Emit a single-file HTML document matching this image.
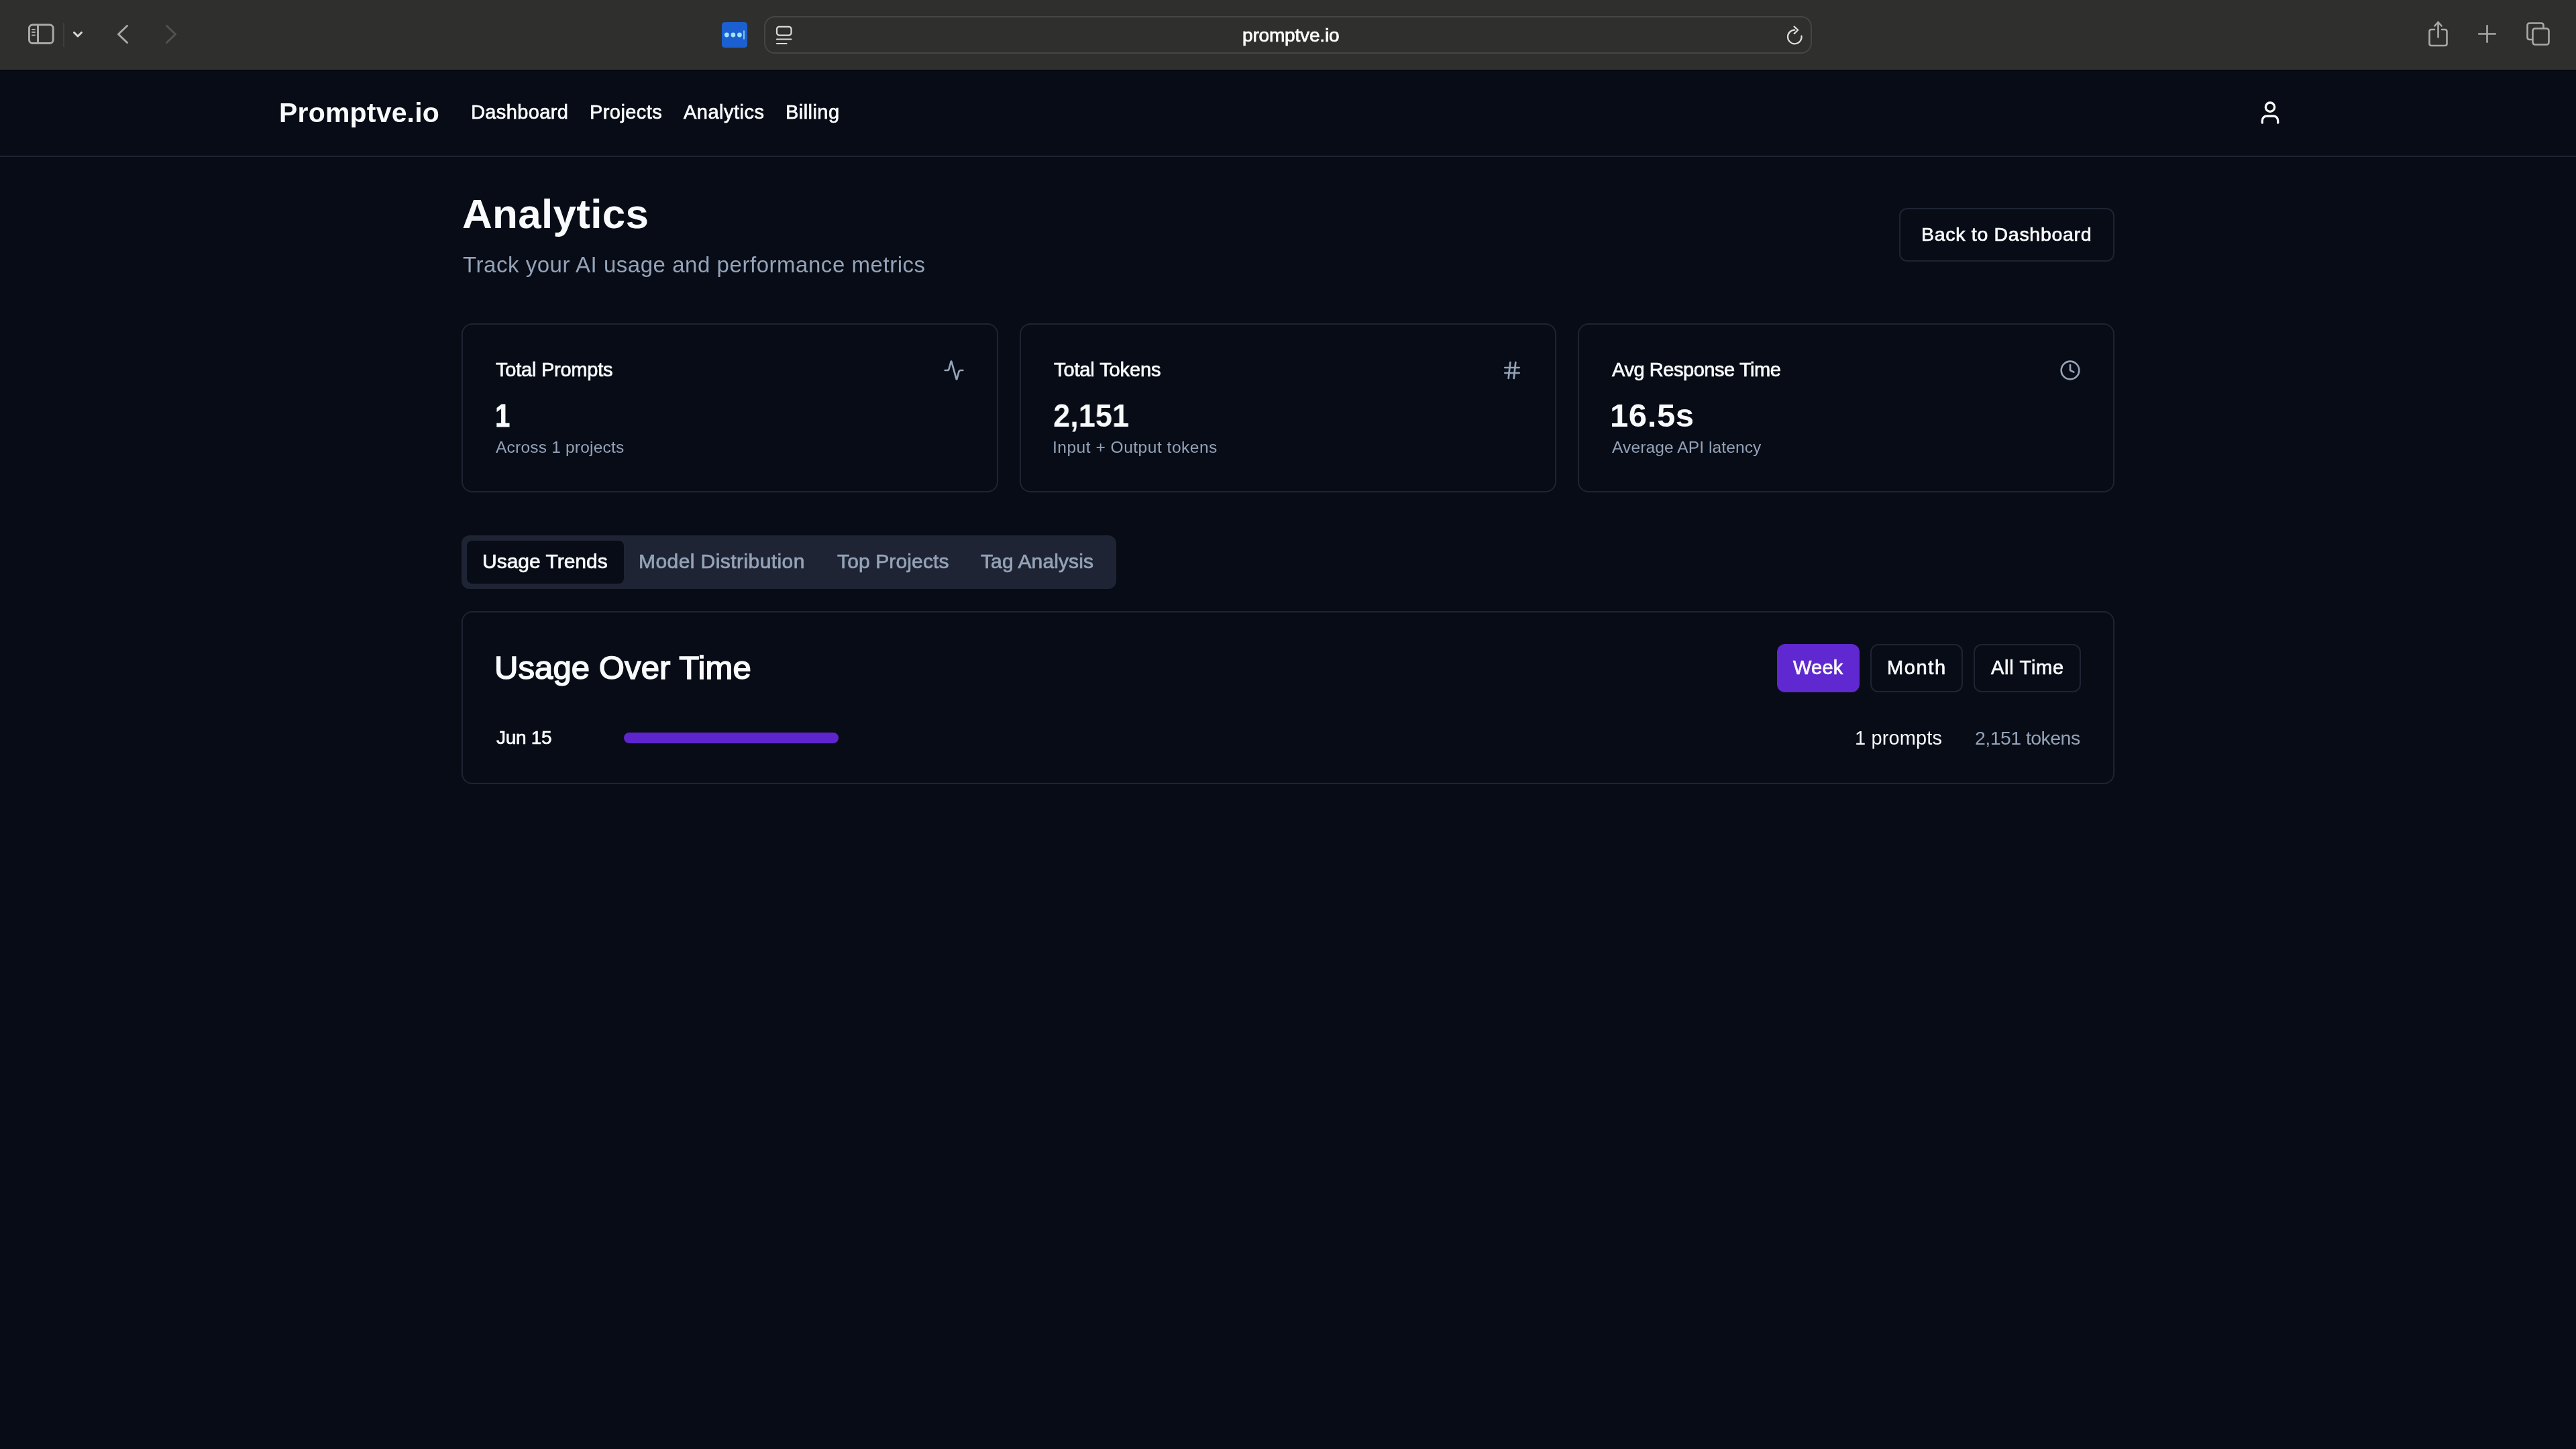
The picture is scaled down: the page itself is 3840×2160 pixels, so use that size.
<!DOCTYPE html>
<html><head><meta charset="utf-8"><title>Promptve.io - Analytics</title>
<style>
html,body{margin:0;padding:0;width:3840px;height:2160px;overflow:hidden;background:#080c16;font-family:"Liberation Sans",sans-serif;}
.b{position:absolute;}
.t{position:absolute;white-space:pre;will-change:transform;}
</style></head><body>
<div class="b" style="left:0px;top:0px;width:3840px;height:104px;background:#2f2f2e;border-radius:0px;"></div><div class="b" style="left:0px;top:104px;width:3840px;height:1px;background:#000000;border-radius:0px;"></div><div class="b" style="left:0px;top:232px;width:3840px;height:2px;background:#1e2433;border-radius:0px;"></div><div class="b" style="left:1139px;top:24px;width:1562px;height:56px;background:#2f2f2e;border:2px solid #464645;border-radius:16px;box-sizing:border-box;"></div><div class="b" style="left:2831px;top:310px;width:321px;height:80px;background:#080c16;border:2px solid #1e2433;border-radius:12px;box-sizing:border-box;"></div><div class="b" style="left:688px;top:482px;width:800px;height:252px;background:#080c16;border:2px solid #1e2433;border-radius:16px;box-sizing:border-box;"></div><div class="b" style="left:1520px;top:482px;width:800px;height:252px;background:#080c16;border:2px solid #1e2433;border-radius:16px;box-sizing:border-box;"></div><div class="b" style="left:2352px;top:482px;width:800px;height:252px;background:#080c16;border:2px solid #1e2433;border-radius:16px;box-sizing:border-box;"></div><div class="b" style="left:688px;top:798px;width:976px;height:80px;background:#1e2433;border-radius:12px;"></div><div class="b" style="left:696px;top:806px;width:234px;height:64px;background:#080c16;border-radius:8px;"></div><div class="b" style="left:688px;top:911px;width:2464px;height:258px;background:#080c16;border:2px solid #1e2433;border-radius:16px;box-sizing:border-box;"></div><div class="b" style="left:2649px;top:960px;width:123px;height:72px;background:#6028d0;border-radius:12px;"></div><div class="b" style="left:2788px;top:960px;width:138px;height:72px;background:#080c16;border:2px solid #1e2433;border-radius:12px;box-sizing:border-box;"></div><div class="b" style="left:2942px;top:960px;width:160px;height:72px;background:#080c16;border:2px solid #1e2433;border-radius:12px;box-sizing:border-box;"></div><div class="b" style="left:930px;top:1092px;width:320px;height:16px;background:#5e25ce;border-radius:8px;"></div>
<svg class="b" style="left:0;top:0" width="3840" height="104" viewBox="0 0 3840 104" fill="none" stroke-linecap="round" stroke-linejoin="round">
 <rect x="43.5" y="37" width="35.7" height="27.5" rx="5" stroke="#a9a9a8" stroke-width="3"/>
 <line x1="56.5" y1="38" x2="56.5" y2="64" stroke="#a9a9a8" stroke-width="3"/>
 <line x1="48" y1="44" x2="52" y2="44" stroke="#a9a9a8" stroke-width="2"/>
 <line x1="48" y1="48" x2="52" y2="48" stroke="#a9a9a8" stroke-width="2"/>
 <line x1="48" y1="52.5" x2="52" y2="52.5" stroke="#a9a9a8" stroke-width="2"/>
 <line x1="95" y1="34.5" x2="95" y2="69.5" stroke="#454544" stroke-width="1.5"/>
 <polyline points="110.5,48.5 116,54 121.5,48.5" stroke="#d8d8d7" stroke-width="3"/>
 <polyline points="189.5,38.5 176.5,51 189.5,63.5" stroke="#a9a9a8" stroke-width="3"/>
 <polyline points="248.5,38.5 261.5,51 248.5,63.5" stroke="#525251" stroke-width="3"/>
 <rect x="1076" y="33" width="38" height="38" rx="4.5" fill="#1c5fd0" stroke="none"/>
 <circle cx="1083.3" cy="52" r="3.4" fill="#9fe3ff" stroke="none"/>
 <circle cx="1092.9" cy="52" r="3.4" fill="#9fe3ff" stroke="none"/>
 <circle cx="1102.4" cy="52" r="3.4" fill="#9fe3ff" stroke="none"/>
 <line x1="1109" y1="45.5" x2="1109" y2="58.5" stroke="#9fe3ff" stroke-width="1.5" stroke-linecap="butt"/>
 <rect x="1158" y="39.8" width="21.5" height="12.8" rx="3.5" stroke="#dcdcdb" stroke-width="2.2"/>
 <line x1="1158" y1="58.5" x2="1179.5" y2="58.5" stroke="#dcdcdb" stroke-width="2.2"/>
 <line x1="1158" y1="65" x2="1172.5" y2="65" stroke="#dcdcdb" stroke-width="2.2"/>
 <path d="M2685.5 53.6 A10.3 10.3 0 1 1 2675.3 44.7" stroke="#dedede" stroke-width="2.2"/>
 <polyline points="2674.6,39.6 2680.2,44.8 2674.6,50.1" stroke="#dedede" stroke-width="2.2"/>
 <path d="M3629 44 H3624.5 Q3621.5 44 3621.5 47 V65 Q3621.5 68 3624.5 68 H3644.5 Q3647.5 68 3647.5 65 V47 Q3647.5 44 3644.5 44 H3640" stroke="#a9a9a8" stroke-width="2.6"/>
 <line x1="3634.5" y1="33.5" x2="3634.5" y2="55.5" stroke="#a9a9a8" stroke-width="2.6"/>
 <polyline points="3629.5,38.5 3634.5,33 3639.5,38.5" stroke="#a9a9a8" stroke-width="2.6"/>
 <line x1="3707.5" y1="38.2" x2="3707.5" y2="62.8" stroke="#a9a9a8" stroke-width="2.6"/>
 <line x1="3695.2" y1="50.5" x2="3719.8" y2="50.5" stroke="#a9a9a8" stroke-width="2.6"/>
 <path d="M3774 59 H3771 Q3767.5 59 3767.5 55.5 V38 Q3767.5 34.5 3771 34.5 H3788 Q3791.5 34.5 3791.5 38 V41" stroke="#a9a9a8" stroke-width="2.6"/>
 <rect x="3775.5" y="42.5" width="24" height="24" rx="3.5" stroke="#a9a9a8" stroke-width="2.6"/>
</svg>
<svg class="b" style="left:3364px;top:148px" width="40" height="40" viewBox="0 0 24 24" fill="none" stroke="#f8fafc" stroke-width="2" stroke-linecap="round" stroke-linejoin="round" ><path d="M19 21v-2a4 4 0 0 0-4-4H9a4 4 0 0 0-4 4v2"/><circle cx="12" cy="7" r="4"/></svg><svg class="b" style="left:1406px;top:536px" width="32" height="32" viewBox="0 0 24 24" fill="none" stroke="#94a3b8" stroke-width="2" stroke-linecap="round" stroke-linejoin="round" ><path d="M22 12h-2.48a2 2 0 0 0-1.93 1.46l-2.35 8.36a.25.25 0 0 1-.48 0L9.24 2.18a.25.25 0 0 0-.48 0l-2.35 8.36A2 2 0 0 1 4.49 12H2"/></svg><svg class="b" style="left:2238px;top:536px" width="32" height="32" viewBox="0 0 24 24" fill="none" stroke="#94a3b8" stroke-width="2" stroke-linecap="round" stroke-linejoin="round" ><line x1="4" x2="20" y1="9" y2="9"/><line x1="4" x2="20" y1="15" y2="15"/><line x1="10" x2="8" y1="3" y2="21"/><line x1="16" x2="14" y1="3" y2="21"/></svg><svg class="b" style="left:3070px;top:536px" width="32" height="32" viewBox="0 0 24 24" fill="none" stroke="#94a3b8" stroke-width="2" stroke-linecap="round" stroke-linejoin="round" ><circle cx="12" cy="12" r="10"/><polyline points="12 6 12 12 16 14"/></svg>
<div class="t" style="left:1851.6px;top:39.0px;font-size:28px;line-height:28px;font-weight:400;color:#ffffff;letter-spacing:-0.18px;-webkit-text-stroke:0.7px #ffffff;">promptve.io</div><div class="t" style="left:415.5px;top:148.0px;font-size:41px;line-height:41px;font-weight:700;color:#f8fafc;letter-spacing:0.19px;">Promptve.io</div><div class="t" style="left:701.8px;top:152.6px;font-size:29px;line-height:29px;font-weight:400;color:#f8fafc;letter-spacing:0.37px;-webkit-text-stroke:0.7px #f8fafc;">Dashboard</div><div class="t" style="left:878.5px;top:152.5px;font-size:29px;line-height:29px;font-weight:400;color:#f8fafc;letter-spacing:0.43px;-webkit-text-stroke:0.7px #f8fafc;">Projects</div><div class="t" style="left:1019.2px;top:152.5px;font-size:29px;line-height:29px;font-weight:400;color:#f8fafc;letter-spacing:0.49px;-webkit-text-stroke:0.7px #f8fafc;">Analytics</div><div class="t" style="left:1170.9px;top:152.5px;font-size:29px;line-height:29px;font-weight:400;color:#f8fafc;letter-spacing:0.44px;-webkit-text-stroke:0.7px #f8fafc;">Billing</div><div class="t" style="left:688.5px;top:287.6px;font-size:62px;line-height:62px;font-weight:700;color:#f8fafc;letter-spacing:0.29px;">Analytics</div><div class="t" style="left:689.5px;top:378.0px;font-size:33px;line-height:33px;font-weight:400;color:#94a3b8;letter-spacing:0.54px;">Track your AI usage and performance metrics</div><div class="t" style="left:2863.5px;top:334.6px;font-size:28.5px;line-height:28.5px;font-weight:400;color:#f8fafc;letter-spacing:0.70px;-webkit-text-stroke:0.7px #f8fafc;">Back to Dashboard</div><div class="t" style="left:739.3px;top:537.0px;font-size:29px;line-height:29px;font-weight:400;color:#f8fafc;letter-spacing:-0.23px;-webkit-text-stroke:0.7px #f8fafc;">Total Prompts</div><div class="t" style="left:1570.9px;top:537.0px;font-size:29px;line-height:29px;font-weight:400;color:#f8fafc;letter-spacing:-0.11px;-webkit-text-stroke:0.7px #f8fafc;">Total Tokens</div><div class="t" style="left:2402.5px;top:537.0px;font-size:29px;line-height:29px;font-weight:400;color:#f8fafc;letter-spacing:-0.44px;-webkit-text-stroke:0.7px #f8fafc;">Avg Response Time</div><div class="t" style="left:736.3px;top:595.0px;font-size:49px;line-height:49px;font-weight:700;color:#f8fafc;letter-spacing:0.00px;transform:scaleX(0.82);transform-origin:0 0;-webkit-text-stroke:0.8px #f8fafc;margin-left:1.5px;">1</div><div class="t" style="left:1570.0px;top:595.0px;font-size:49px;line-height:49px;font-weight:700;color:#f8fafc;letter-spacing:0.00px;transform:scaleX(0.922);transform-origin:1.0px 0;">2,151</div><div class="t" style="left:2399.5px;top:595.0px;font-size:49px;line-height:49px;font-weight:700;color:#f8fafc;letter-spacing:0.61px;">16.5s</div><div class="t" style="left:739.3px;top:655.2px;font-size:24.5px;line-height:24.5px;font-weight:400;color:#94a3b8;letter-spacing:0.21px;">Across 1 projects</div><div class="t" style="left:1569.0px;top:655.2px;font-size:24.5px;line-height:24.5px;font-weight:400;color:#94a3b8;letter-spacing:0.52px;">Input + Output tokens</div><div class="t" style="left:2402.5px;top:655.2px;font-size:24.5px;line-height:24.5px;font-weight:400;color:#94a3b8;letter-spacing:0.12px;">Average API latency</div><div class="t" style="left:719.0px;top:822.4px;font-size:30px;line-height:30px;font-weight:400;color:#f8fafc;letter-spacing:-0.01px;-webkit-text-stroke:0.7px #f8fafc;">Usage Trends</div><div class="t" style="left:952.3px;top:822.4px;font-size:30px;line-height:30px;font-weight:400;color:#94a3b8;letter-spacing:0.43px;-webkit-text-stroke:0.7px #94a3b8;">Model Distribution</div><div class="t" style="left:1247.5px;top:822.4px;font-size:30px;line-height:30px;font-weight:400;color:#94a3b8;letter-spacing:0.13px;-webkit-text-stroke:0.7px #94a3b8;">Top Projects</div><div class="t" style="left:1462.0px;top:822.4px;font-size:30px;line-height:30px;font-weight:400;color:#94a3b8;letter-spacing:0.11px;-webkit-text-stroke:0.7px #94a3b8;">Tag Analysis</div><div class="t" style="left:736.5px;top:970.5px;font-size:49px;line-height:49px;font-weight:400;color:#f8fafc;letter-spacing:0.10px;-webkit-text-stroke:1.6px #f8fafc;">Usage Over Time</div><div class="t" style="left:2673.4px;top:981.4px;font-size:29px;line-height:29px;font-weight:400;color:#f8fafc;letter-spacing:0.20px;-webkit-text-stroke:0.7px #f8fafc;">Week</div><div class="t" style="left:2812.7px;top:981.4px;font-size:29px;line-height:29px;font-weight:400;color:#f8fafc;letter-spacing:1.61px;-webkit-text-stroke:0.7px #f8fafc;">Month</div><div class="t" style="left:2968.0px;top:981.4px;font-size:29px;line-height:29px;font-weight:400;color:#f8fafc;letter-spacing:0.70px;-webkit-text-stroke:0.7px #f8fafc;">All Time</div><div class="t" style="left:739.7px;top:1086.2px;font-size:28px;line-height:28px;font-weight:400;color:#f8fafc;letter-spacing:-0.32px;-webkit-text-stroke:0.7px #f8fafc;">Jun 15</div><div class="t" style="left:2765.3px;top:1086.2px;font-size:29px;line-height:29px;font-weight:400;color:#f8fafc;letter-spacing:0.13px;">1 prompts</div><div class="t" style="left:2943.5px;top:1086.2px;font-size:28.5px;line-height:28.5px;font-weight:400;color:#94a3b8;letter-spacing:-0.55px;">2,151 tokens</div>
</body></html>
